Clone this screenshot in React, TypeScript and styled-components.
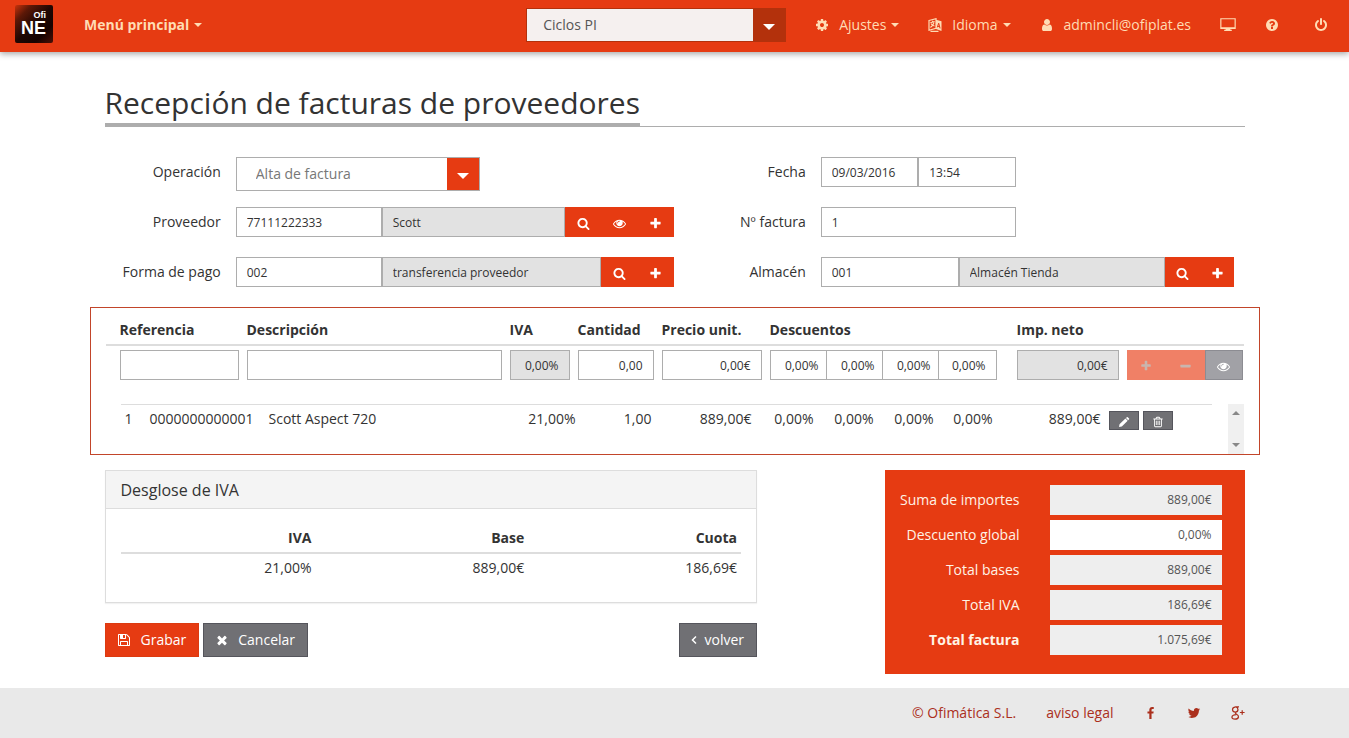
import React from "react";
import styled, { createGlobalStyle, css } from "styled-components";

const brand = "#e63b12";
const brandDark = "#b3310c";
const cream = "#ffdcb4";
const line = "#adadad";
const slate = "#707074";
const slateDark = "#55555c";

const GlobalStyle = createGlobalStyle`
  *, *::before, *::after { box-sizing: border-box; }
  body { margin: 0; background: #fff; color: #333; font: 14px/20px "Open Sans", "Noto Sans", sans-serif; }
  input, select, button { font-family: inherit; color: inherit; margin: 0; border-radius: 0; }
  button { cursor: pointer; }
  a { color: inherit; text-decoration: none; }
`;

/* ---------- icons (1792-unit grid) ---------- */

const shapes = {
  cog: "M1152 896q0-106-75-181t-181-75-181 75-75 181 75 181 181 75 181-75 75-181zm512-109v222q0 12-8 23t-20 13l-185 28q-19 54-39 91 35 50 107 138 10 12 10 25t-9 23q-27 37-99 108t-94 71q-12 0-26-9l-138-108q-44 23-91 38-16 136-29 186-7 28-36 28h-222q-14 0-24.5-8.5t-11.5-21.5l-28-184q-49-16-90-37l-141 107q-10 9-25 9-14 0-25-11-126-114-165-168-7-10-7-23 0-12 8-23 15-21 51-66.5t54-70.5q-27-50-41-99l-183-27q-13-2-21-12.5t-8-23.5v-222q0-12 8-23t19-13l186-28q14-46 39-92-40-57-107-138-10-12-10-24 0-10 9-23 26-36 98.5-107.5t94.5-71.5q13 0 26 10l138 107q44-23 91-38 16-136 29-186 7-28 36-28h222q14 0 24.5 8.5t11.5 21.5l28 184q49 16 90 37l142-107q9-9 24-9 13 0 25 10 129 119 165 170 7 8 7 22 0 12-8 23-15 21-51 66.5t-54 70.5q26 50 41 98l183 28q13 2 21 12.5t8 23.5z",
  user: "M1536 1399q0 109-62.5 187t-150.5 78h-854q-88 0-150.5-78t-62.5-187q0-85 8.5-160.5t31.5-152 58.5-131 94-89 134.5-34.5q131 128 313 128t313-128q76 0 134.5 34.5t94 89 58.5 131 31.5 152 8.5 160.5zm-256-887q0 159-112.5 271.5t-271.5 112.5-271.5-112.5-112.5-271.5 112.5-271.5 271.5-112.5 271.5 112.5 112.5 271.5z",
  help: "M1024 1376v-192q0-14-9-23t-23-9h-192q-14 0-23 9t-9 23v192q0 14 9 23t23 9h192q14 0 23-9t9-23zm256-672q0-88-55.5-163t-138.5-116-170-41q-243 0-371 213-15 24 8 42l132 100q7 6 19 6 16 0 25-12 53-68 86-92 34-24 86-24 48 0 85.5 26t37.5 59q0 38-20 61t-68 45q-63 28-115.5 86.5t-52.5 125.5v36q0 14 9 23t23 9h192q14 0 23-9t9-23q0-19 21.5-49.5t54.5-49.5q32-18 49-28.5t46-35 44.5-48 28-60.5 12.5-81zm384 192q0 209-103 385.5t-279.5 279.5-385.5 103-385.5-103-279.5-279.5-103-385.5 103-385.5 279.5-279.5 385.5-103 385.5 103 279.5 279.5 103 385.5z",
  power: "M1664 896q0 156-61 298t-164 245-245 164-298 61-298-61-245-164-164-245-61-298q0-182 80.5-343t226.5-270q43-32 95.5-25t83.5 50q32 42 24.5 94.5t-49.5 84.5q-98 74-151.5 181t-53.5 228q0 104 40.5 198.5t109.5 163.5 163.5 109.5 198.5 40.5 198.5-40.5 163.5-109.5 109.5-163.5 40.5-198.5q0-121-53.5-228t-151.5-181q-42-32-49.5-84.5t24.5-94.5q31-43 84-50t95 25q146 109 226.5 270t80.5 343zm-640-768v640q0 52-38 90t-90 38-90-38-38-90v-640q0-52 38-90t90-38 90 38 38 90z",
  desktop: "M30 130h1732v1200h-600v110h160v130h-852v-130h160v-110h-600zM160 260v880h1472v-880z",
  search: "M1216 832q0-185-131.5-316.5t-316.5-131.5-316.5 131.5-131.5 316.5 131.5 316.5 316.5 131.5 316.5-131.5 131.5-316.5zm512 832q0 52-38 90t-90 38q-54 0-90-38l-343-342q-179 124-399 124-143 0-273.5-55.5t-225-150-150-225-55.5-273.5 55.5-273.5 150-225 225-150 273.5-55.5 273.5 55.5 225 150 150 225 55.5 273.5q0 220-124 399l343 343q37 37 37 90z",
  eye: "M1664 960q-152-236-381-353 61 104 61 225 0 185-131.5 316.5t-316.5 131.5-316.5-131.5-131.5-316.5q0-121 61-225-229 117-381 353 133 205 333.5 326.5t434.5 121.5 434.5-121.5 333.5-326.5zm-720-384q0-20-14-34t-34-14q-125 0-214.5 89.5t-89.5 214.5q0 20 14 34t34 14 34-14 14-34q0-86 61-147t147-61q20 0 34-14t14-34zm848 384q0 34-20 69-140 230-376.5 368.5t-499.5 138.5-499.5-139-376.5-368q-20-35-20-69t20-69q140-229 376.5-368t499.5-139 499.5 139 376.5 368q20 35 20 69z",
  plus: "M1600 736v192q0 40-28 68t-68 28h-416v416q0 40-28 68t-68 28h-192q-40 0-68-28t-28-68v-416h-416q-40 0-68-28t-28-68v-192q0-40 28-68t68-28h416v-416q0-40 28-68t68-28h192q40 0 68 28t28 68v416h416q40 0 68 28t28 68z",
  minus: "M1600 736v192q0 40-28 68t-68 28h-1216q-40 0-68-28t-28-68v-192q0-40 28-68t68-28h1216q40 0 68 28t28 68z",
  times: "M1490 1322q0 40-28 68l-136 136q-28 28-68 28t-68-28l-294-294-294 294q-28 28-68 28t-68-28l-136-136q-28-28-28-68t28-68l294-294-294-294q-28-28-28-68t28-68l136-136q28-28 68-28t68 28l294 294 294-294q28-28 68-28t68 28l136 136q28 28 28 68t-28 68l-294 294 294 294q28 28 28 68z",
  save: "M512 1536h768v-384h-768v384zm896 0h128v-896q0-14-10-38.5t-20-34.5l-281-281q-10-10-34-20t-39-10v416q0 40-28 68t-68 28h-576q-40 0-68-28t-28-68v-416h-128v1280h128v-416q0-40 28-68t68-28h832q40 0 68 28t28 68v416zm-384-928v-320q0-13-9.5-22.5t-22.5-9.5h-192q-13 0-22.5 9.5t-9.5 22.5v320q0 13 9.5 22.5t22.5 9.5h192q13 0 22.5-9.5t9.5-22.5zm640 32v928q0 40-28 68t-68 28h-1344q-40 0-68-28t-28-68v-1344q0-40 28-68t68-28h928q40 0 88 20t76 48l280 280q28 28 48 76t20 88z",
  pencil: "M1190 300l130-130q70-60 140 0l190 190q60 70 0 140l-130 130zM1110 380l330 330-830 830q-30 30-70 36l-340 60q-50 0-40-50l60-320q8-50 40-80z",
  trash: "M704 736v576q0 14-9 23t-23 9h-64q-14 0-23-9t-9-23v-576q0-14 9-23t23-9h64q14 0 23 9t9 23zm256 0v576q0 14-9 23t-23 9h-64q-14 0-23-9t-9-23v-576q0-14 9-23t23-9h64q14 0 23 9t9 23zm256 0v576q0 14-9 23t-23 9h-64q-14 0-23-9t-9-23v-576q0-14 9-23t23-9h64q14 0 23 9t9 23zm128 724v-948h-896v948q0 22 7 40.5t14.5 27 10.5 8.5h832q3 0 10.5-8.5t14.5-27 7-40.5zm-672-1076h448l-48-117q-7-9-17-11h-317q-10 2-17 11zm928 32v64q0 14-9 23t-23 9h-96v948q0 83-47 143.5t-113 60.5h-832q-66 0-113-58.5t-47-141.5v-952h-96q-14 0-23-9t-9-23v-64q0-14 9-23t23-9h309l70-167q15-37 54-63t79-26h320q40 0 79 26t54 63l70 167h309q14 0 23 9t9 23z",
  facebook: "M1343 12v264h-157q-86 0-116 36t-30 108v189h293l-39 296h-254v759h-306v-759h-255v-296h255v-218q0-186 104-288.5t277-102.5q147 0 228 12z",
  twitter: "M1684 408q-67 98-162 167 1 14 1 42 0 130-38 259.5t-115.5 248.5-184.5 210.5-258 146-323 54.5q-271 0-496-145 35 4 78 4 225 0 401-138-105-2-188-64.5t-114-159.5q33 5 61 5 43 0 85-11-112-23-185.5-111.5t-73.5-205.5v-4q68 38 146 41-66-44-105-115t-39-154q0-88 44-163 121 149 294.5 238.5t371.5 99.5q-8-38-8-74 0-134 94.5-228.5t228.5-94.5q140 0 236 102 109-21 205-78-37 115-142 178 93-10 186-50z",
};

const Svg = styled.svg`
  display: block;
  flex: none;
  fill: currentColor;
`;

function Icon({ name, size = 14 }: { name: keyof typeof shapes; size?: number }) {
  return (
    <Svg width={size} height={size} viewBox="0 0 1792 1792" fillRule="evenodd" aria-hidden="true">
      <path d={shapes[name]} />
    </Svg>
  );
}

function AngleIcon() {
  return (
    <Svg width="6" height="14" viewBox="0 0 6 14" aria-hidden="true">
      <path d="M5 3.500 1.500 7 5 10.500" fill="none" stroke="currentColor" strokeWidth="1.500" />
    </Svg>
  );
}

function LanguageIcon() {
  return (
    <Svg width="14" height="14" viewBox="0 0 14 14" aria-hidden="true">
      <path d="M8 1.800 13.500 3.300V13L8 11z" />
      <g fill="none" stroke="currentColor" strokeWidth="1.200">
        <path d="M1 2.500 8 .7v9.600L1 12.300zM2.500 13.400h8" />
        <path d="M2.400 4.700 6.600 3.500M4.500 2.800v1.400M6 4.500Q5 7.600 2.400 9.400M3 5.700Q4.500 7.600 6.500 8" />
      </g>
      <path d="M9.300 9.400 10.700 5.200l1.400 5.200M9.800 8.200l1.900.6" fill="none" stroke={brand} strokeWidth="1" />
    </Svg>
  );
}

function GooglePlusIcon() {
  return (
    <Svg width="14" height="14" viewBox="0 0 14 14" aria-hidden="true">
      <g fill="none" stroke="currentColor" strokeWidth="1.200">
        <path d="M8 .9H4.600Q1.500 1.300 1.500 3.700 1.700 6 4.400 6.100 6.900 5.900 7 3.600 6.800 1.500 5 1" />
        <path d="M4.600 6.200Q4 7.200 5.300 8 7.800 9.300 7.500 11 7 13.200 4 13.200 1 13.100.9 11.200 1.100 8.900 5.300 8.700" />
        <path d="M11.200 4.200v4.600M8.900 6.500h4.700" />
      </g>
    </Svg>
  );
}

/* ---------- top bar ---------- */

const TopBar = styled.header`
  display: flex;
  align-items: center;
  height: 52px;
  padding: 0 21px 2px 15px;
  background: ${brand};
  color: ${cream};
  box-shadow: 0 2px 6px rgba(0, 0, 0, 0.35);
`;

const Logo = styled.a`
  display: flex;
  flex-direction: column;
  align-items: flex-end;
  width: 38px;
  height: 38px;
  padding: 6px 7px 0 0;
  margin: 0 31px 2px 0;
  border-radius: 2px;
  background: linear-gradient(135deg, #c9330c 0, #5c1807 22%, #1f0703 50%, #160301 75%, #4a1006 100%);
  color: #fff;
  font-family: "Liberation Sans", Arial, sans-serif;
  font-weight: bold;
`;

const LogoSmall = styled.span`
  font-size: 9px;
  line-height: 9px;
`;

const LogoBig = styled.span`
  font-size: 18px;
  line-height: 17px;
`;

const MenuButton = styled.button<{ $strong?: boolean }>`
  display: flex;
  align-items: center;
  padding: 0;
  border: 0;
  background: none;
  font-size: 14px;
  line-height: 20px;
  font-weight: ${(p) => (p.$strong ? 700 : 400)};
`;

const Caret = styled.span<{ $big?: boolean }>`
  width: 0;
  height: 0;
  margin-left: ${(p) => (p.$big ? 0 : 5)}px;
  border: solid transparent;
  border-width: ${(p) => (p.$big ? "6px 6px 0" : "4px 4px 0")};
  border-top-color: currentColor;
`;

const TopNav = styled.nav`
  display: flex;
  align-items: center;
  gap: 29px;
  margin-left: auto;
`;

const MenuText = styled.span`
  margin-left: 10px;
`;

const IconLink = styled.a<{ $apart?: boolean }>`
  display: flex;
  margin-left: ${(p) => (p.$apart ? 6 : 0)}px;
`;

const SelectBox = styled.div<{ $dark?: boolean }>`
  position: relative;
  width: ${(p) => (p.$dark ? "260px" : "55.7%")};
  height: 34px;
  border: 1px solid ${(p) => (p.$dark ? brandDark : line)};
  background: ${(p) => (p.$dark ? "#f5f0ef" : "#fff")};
  color: ${(p) => (p.$dark ? "#555" : "#777")};
`;

const Select = styled.select<{ $indent: number }>`
  display: block;
  width: 100%;
  height: 32px;
  padding: 0 40px 1px ${(p) => p.$indent}px;
  border: 0;
  background: none;
  appearance: none;
  font-size: 14px;
`;

const SelectArrow = styled.span<{ $dark?: boolean }>`
  position: absolute;
  top: 0;
  right: 0;
  display: flex;
  align-items: center;
  justify-content: center;
  width: 32px;
  height: 32px;
  padding-top: 4px;
  background: ${(p) => (p.$dark ? brandDark : brand)};
  color: #fff;
  pointer-events: none;
`;

/* ---------- page ---------- */

const Container = styled.main`
  max-width: 1170px;
  margin: 0 auto;
  padding-top: 33px;
`;

const TitleRow = styled.div`
  display: flex;
  margin: 0 15px 30px;
  box-shadow: inset 0 -1px 0 ${line};
`;

const Title = styled.h1`
  margin: 0;
  padding-bottom: 2px;
  border-bottom: 4px solid ${line};
  font-size: 30px;
  line-height: 36px;
  font-weight: 400;
`;

const Form = styled.form`
  display: grid;
  grid-template-columns: 1fr 1fr;
  grid-auto-rows: 30px;
  row-gap: 20px;
  margin-bottom: 20px;
`;

const FormRow = styled.div`
  display: grid;
  grid-template-columns: 1fr 3fr;
`;

const FormLabel = styled.label`
  padding-right: 15px;
  line-height: 30px;
  text-align: right;
`;

const Group = styled.div<{ $width?: string }>`
  display: flex;
  width: ${(p) => p.$width ?? "100%"};
`;

const Field = styled.input<{ $muted?: boolean; $right?: boolean; $basis?: string }>`
  min-width: 0;
  flex: ${(p) => (p.$basis ? `0 0 ${p.$basis}` : "1 1 0")};
  display: block;
  width: 100%;
  height: 30px;
  padding: 0 10px;
  border: 1px solid ${line};
  background: ${(p) => (p.$muted ? "#e2e2e2" : "#fff")};
  font-size: 12px;
  text-align: ${(p) => (p.$right ? "right" : "left")};
`;

const GroupButton = styled.button<{ $width: number; $tone?: "faded" | "grey" }>`
  display: flex;
  flex: none;
  align-items: center;
  justify-content: center;
  width: ${(p) => p.$width}px;
  height: 30px;
  padding: 2px 0 0;
  border: 0;
  background: ${brand};
  color: #fff;
  ${(p) =>
    p.$tone === "faded" &&
    css`
      background: #f08066;
      color: #c9b5ae;
    `}
  ${(p) =>
    p.$tone === "grey" &&
    css`
      border: 1px solid #8c8c92;
      background: #a1a1a6;
    `}
`;

/* ---------- invoice lines ---------- */

const LinesBox = styled.section`
  height: 148px;
  padding: 10px 15px 0;
  margin-bottom: 15px;
  border: 1px solid #c2452a;
`;

const Table = styled.table`
  width: 100%;
  border-collapse: collapse;
  table-layout: fixed;
`;

const EntryHead = styled.th<{ $first?: boolean }>`
  height: 27px;
  padding: 0 4px 2px ${(p) => (p.$first ? 14 : 4)}px;
  border-bottom: 2px solid #ddd;
  text-align: left;
  white-space: nowrap;
`;

const EntryCell = styled.td<{ $first?: boolean; $last?: boolean }>`
  padding: 4px ${(p) => (p.$last ? 1 : 4)}px 0 ${(p) => (p.$first ? 14 : 4)}px;
`;

const Discounts = styled.div`
  display: flex;
  width: 227px;

  input {
    flex: 0 0 56px;
    padding-right: 7px;
    border-right: 0;
  }
  input:last-child {
    flex: 0 0 59px;
    padding-right: 10px;
    border-right: 1px solid ${line};
  }
`;

const LinesScroll = styled.div`
  display: flex;
  justify-content: space-between;
  height: 50px;
  margin: 24px 0 0 15px;
`;

const LinesArea = styled.div`
  flex: 1;
  padding-right: 16px;
`;

const LineCell = styled.td<{ $right?: boolean }>`
  height: 28px;
  padding: 0 4px;
  border-top: 1px solid #ddd;
  text-align: ${(p) => (p.$right ? "right" : "left")};
  white-space: nowrap;
`;

const RowActions = styled.div`
  display: flex;
  gap: 4px;
  padding-top: 3px;
`;

const RowButton = styled.button`
  display: flex;
  align-items: center;
  justify-content: center;
  width: 30px;
  height: 19px;
  padding: 4px 0 0;
  border: 1px solid ${slateDark};
  background: ${slate};
  color: #fff;
`;

const ScrollTrack = styled.div`
  display: flex;
  flex-direction: column;
  justify-content: space-between;
  align-items: center;
  width: 16px;
  height: 50px;
  padding: 7px 0;
  background: #f0f0f0;
`;

const ScrollArrow = styled.span<{ $up?: boolean }>`
  border: solid transparent;
  border-width: ${(p) => (p.$up ? "0 4px 4px" : "4px 4px 0")};
  border-bottom-color: ${(p) => (p.$up ? "#888" : "transparent")};
  border-top-color: ${(p) => (p.$up ? "transparent" : "#888")};
`;

/* ---------- lower part ---------- */

const Lower = styled.div`
  display: grid;
  grid-template-columns: 7fr 5fr;
  align-items: start;
  margin-bottom: 14px;
`;

const LeftColumn = styled.div`
  padding: 0 15px;
`;

const Panel = styled.section`
  height: 133px;
  margin-bottom: 20px;
  border: 1px solid #ddd;
  box-shadow: 0 1px 1px rgba(0, 0, 0, 0.05);
`;

const PanelTitle = styled.h2`
  margin: 0;
  padding: 10px 15px 8px;
  border-bottom: 1px solid #ddd;
  background: #f4f4f4;
  font-size: 16px;
  line-height: 19px;
  font-weight: 400;
`;

const PanelBody = styled.div`
  padding: 14px 15px;
`;

const VatHead = styled.th`
  height: 30px;
  padding: 1px 4px 0;
  border-bottom: 2px solid #ddd;
  text-align: right;
`;

const VatCell = styled.td`
  height: 28px;
  padding: 0 4px;
  text-align: right;
`;

const Actions = styled.div`
  display: flex;
  gap: 4px;
`;

const ActionButton = styled.button<{ $primary?: boolean; $end?: boolean; $gap?: number }>`
  display: flex;
  align-items: center;
  gap: ${(p) => p.$gap ?? 9}px;
  height: 34px;
  padding: 0 12px 1px 11px;
  margin-left: ${(p) => (p.$end ? "auto" : 0)};
  border: 1px solid ${(p) => (p.$primary ? "#dc3a10" : slateDark)};
  background: ${(p) => (p.$primary ? brand : slate)};
  color: #fff;
  font-size: 14px;
  line-height: 20px;
`;

const Totals = styled.section`
  display: grid;
  gap: 5px;
  width: 360px;
  height: 204px;
  padding: 15px 23px 0 0;
  margin: 0 15px 0 auto;
  align-content: start;
  background: ${brand};
`;

const TotalRow = styled.div<{ $strong?: boolean }>`
  display: flex;
  justify-content: flex-end;
  gap: 30px;
  color: #fff3e6;
  line-height: 30px;
  font-weight: ${(p) => (p.$strong ? 700 : 400)};
`;

const TotalField = styled.input<{ $muted?: boolean }>`
  width: 172px;
  height: 30px;
  padding: 0 10px 2px;
  border: 0;
  background: ${(p) => (p.$muted ? "#eee" : "#fff")};
  color: #555;
  font-size: 12px;
  text-align: right;
`;

const Footer = styled.footer`
  background: #e9e9e9;
  color: #ab2f1c;
`;

const FooterInner = styled.div`
  display: flex;
  align-items: center;
  justify-content: flex-end;
  gap: 30px;
  max-width: 1170px;
  height: 50px;
  padding: 0 15px;
  margin: 0 auto;
`;

const totals = [
  { id: "suma", label: "Suma de importes", value: "889,00€", muted: true },
  { id: "dto", label: "Descuento global", value: "0,00%" },
  { id: "bases", label: "Total bases", value: "889,00€", muted: true },
  { id: "iva", label: "Total IVA", value: "186,69€", muted: true },
  { id: "total", label: "Total factura", value: "1.075,69€", muted: true, strong: true },
];

export default function App() {
  return (
    <>
      <GlobalStyle />
      <TopBar>
        <Logo href="#inicio">
          <LogoSmall>Ofi</LogoSmall>
          <LogoBig>NE</LogoBig>
        </Logo>
        <MenuButton $strong>
          Menú principal <Caret />
        </MenuButton>
        <TopNav>
          <SelectBox $dark>
            <Select $indent={16} aria-label="Empresa" defaultValue="Ciclos PI">
              <option>Ciclos PI</option>
            </Select>
            <SelectArrow $dark>
              <Caret $big />
            </SelectArrow>
          </SelectBox>
          <MenuButton>
            <Icon name="cog" />
            <MenuText>Ajustes</MenuText>
            <Caret />
          </MenuButton>
          <MenuButton>
            <LanguageIcon />
            <MenuText>Idioma</MenuText>
            <Caret />
          </MenuButton>
          <MenuButton>
            <Icon name="user" />
            <MenuText>admincli@ofiplat.es</MenuText>
          </MenuButton>
          <IconLink href="#escritorio" aria-label="Escritorio">
            <Icon name="desktop" size={16} />
          </IconLink>
          <IconLink href="#ayuda" aria-label="Ayuda">
            <Icon name="help" />
          </IconLink>
          <IconLink href="#salir" aria-label="Salir" $apart>
            <Icon name="power" />
          </IconLink>
        </TopNav>
      </TopBar>

      <Container>
        <TitleRow>
          <Title>Recepción de facturas de proveedores</Title>
        </TitleRow>

        <Form>
          <FormRow>
            <FormLabel htmlFor="operacion">Operación</FormLabel>
            <SelectBox>
              <Select $indent={19} id="operacion" defaultValue="Alta de factura">
                <option>Alta de factura</option>
              </Select>
              <SelectArrow>
                <Caret $big />
              </SelectArrow>
            </SelectBox>
          </FormRow>
          <FormRow>
            <FormLabel htmlFor="fecha">Fecha</FormLabel>
            <Group $width="44.4444%">
              <Field id="fecha" defaultValue="09/03/2016" />
              <Field aria-label="Hora" defaultValue="13:54" />
            </Group>
          </FormRow>

          <FormRow>
            <FormLabel htmlFor="proveedor">Proveedor</FormLabel>
            <Group $width="99.8%">
              <Field id="proveedor" $basis="33.3333%" defaultValue="77111222333" />
              <Field aria-label="Nombre del proveedor" $muted readOnly value="Scott" />
              <GroupButton type="button" $width={37} aria-label="Buscar"><Icon name="search" size={13} /></GroupButton>
              <GroupButton type="button" $width={36} aria-label="Ver"><Icon name="eye" size={13} /></GroupButton>
              <GroupButton type="button" $width={36} aria-label="Añadir"><Icon name="plus" size={13} /></GroupButton>
            </Group>
          </FormRow>
          <FormRow>
            <FormLabel htmlFor="numero">Nº factura</FormLabel>
            <Group $width="44.4444%">
              <Field id="numero" defaultValue="1" />
            </Group>
          </FormRow>

          <FormRow>
            <FormLabel htmlFor="pago">Forma de pago</FormLabel>
            <Group $width="99.8%">
              <Field id="pago" $basis="33.3333%" defaultValue="002" />
              <Field aria-label="Nombre de la forma de pago" $muted readOnly value="transferencia proveedor" />
              <GroupButton type="button" $width={37} aria-label="Buscar"><Icon name="search" size={13} /></GroupButton>
              <GroupButton type="button" $width={36} aria-label="Añadir"><Icon name="plus" size={13} /></GroupButton>
            </Group>
          </FormRow>
          <FormRow>
            <FormLabel htmlFor="almacen">Almacén</FormLabel>
            <Group $width="94.2%">
              <Field id="almacen" $basis="33.3333%" defaultValue="001" />
              <Field aria-label="Nombre del almacén" $muted readOnly value="Almacén Tienda" />
              <GroupButton type="button" $width={35} aria-label="Buscar"><Icon name="search" size={13} /></GroupButton>
              <GroupButton type="button" $width={34} aria-label="Añadir"><Icon name="plus" size={13} /></GroupButton>
            </Group>
          </FormRow>
        </Form>

        <LinesBox>
          <Table>
            <colgroup>
              <col width="137" />
              <col />
              <col width="68" />
              <col width="84" />
              <col width="108" />
              <col width="247" />
              <col width="110" />
              <col width="121" />
            </colgroup>
            <thead>
              <tr>
                <EntryHead $first>Referencia</EntryHead>
                <EntryHead>Descripción</EntryHead>
                <EntryHead>IVA</EntryHead>
                <EntryHead>Cantidad</EntryHead>
                <EntryHead>Precio unit.</EntryHead>
                <EntryHead>Descuentos</EntryHead>
                <EntryHead>Imp. neto</EntryHead>
                <EntryHead aria-label="Acciones" />
              </tr>
            </thead>
            <tbody>
              <tr>
                <EntryCell $first><Field aria-label="Referencia" /></EntryCell>
                <EntryCell><Field aria-label="Descripción" /></EntryCell>
                <EntryCell><Field aria-label="IVA" $right $muted readOnly value="0,00%" /></EntryCell>
                <EntryCell><Field aria-label="Cantidad" $right defaultValue="0,00" /></EntryCell>
                <EntryCell><Field aria-label="Precio unitario" $right defaultValue="0,00€" /></EntryCell>
                <EntryCell>
                  <Discounts>
                    {[1, 2, 3, 4].map((n) => (
                      <Field key={n} aria-label={`Descuento ${n}`} $right defaultValue="0,00%" />
                    ))}
                  </Discounts>
                </EntryCell>
                <EntryCell><Field aria-label="Importe neto" $right $muted readOnly value="0,00€" /></EntryCell>
                <EntryCell $last>
                  <Group>
                    <GroupButton type="button" disabled $tone="faded" $width={39} aria-label="Añadir línea"><Icon name="plus" size={12} /></GroupButton>
                    <GroupButton type="button" disabled $tone="faded" $width={39} aria-label="Quitar línea"><Icon name="minus" size={13} /></GroupButton>
                    <GroupButton type="button" $tone="grey" $width={38} aria-label="Ver línea"><Icon name="eye" size={13} /></GroupButton>
                  </Group>
                </EntryCell>
              </tr>
            </tbody>
          </Table>

          <LinesScroll>
            <LinesArea>
              <Table>
                <colgroup>
                  <col width="25" />
                  <col width="119" />
                  <col />
                  <col width="68" />
                  <col width="76" />
                  <col width="100" />
                  <col width="62" />
                  <col width="60" />
                  <col width="60" />
                  <col width="59" />
                  <col width="108" />
                  <col width="107" />
                </colgroup>
                <tbody>
                  <tr>
                    <LineCell>1</LineCell>
                    <LineCell>0000000000001</LineCell>
                    <LineCell>Scott Aspect 720</LineCell>
                    <LineCell $right>21,00%</LineCell>
                    <LineCell $right>1,00</LineCell>
                    <LineCell $right>889,00€</LineCell>
                    <LineCell $right>0,00%</LineCell>
                    <LineCell $right>0,00%</LineCell>
                    <LineCell $right>0,00%</LineCell>
                    <LineCell $right>0,00%</LineCell>
                    <LineCell $right>889,00€</LineCell>
                    <LineCell>
                      <RowActions>
                        <RowButton aria-label="Editar"><Icon name="pencil" size={12} /></RowButton>
                        <RowButton aria-label="Borrar"><Icon name="trash" size={12} /></RowButton>
                      </RowActions>
                    </LineCell>
                  </tr>
                </tbody>
              </Table>
            </LinesArea>
            <ScrollTrack aria-hidden="true">
              <ScrollArrow $up />
              <ScrollArrow />
            </ScrollTrack>
          </LinesScroll>
        </LinesBox>

        <Lower>
          <LeftColumn>
            <Panel>
              <PanelTitle>Desglose de IVA</PanelTitle>
              <PanelBody>
                <Table>
                  <colgroup>
                    <col width="195" />
                    <col />
                    <col />
                  </colgroup>
                  <thead>
                    <tr>
                      <VatHead>IVA</VatHead>
                      <VatHead>Base</VatHead>
                      <VatHead>Cuota</VatHead>
                    </tr>
                  </thead>
                  <tbody>
                    <tr>
                      <VatCell>21,00%</VatCell>
                      <VatCell>889,00€</VatCell>
                      <VatCell>186,69€</VatCell>
                    </tr>
                  </tbody>
                </Table>
              </PanelBody>
            </Panel>
            <Actions>
              <ActionButton $primary $gap={10}><Icon name="save" />Grabar</ActionButton>
              <ActionButton><Icon name="times" />Cancelar</ActionButton>
              <ActionButton $end $gap={7}><AngleIcon />volver</ActionButton>
            </Actions>
          </LeftColumn>

          <Totals>
            {totals.map((t) => (
              <TotalRow key={t.id} $strong={t.strong}>
                <label htmlFor={t.id}>{t.label}</label>
                <TotalField id={t.id} $muted={t.muted} readOnly={t.muted} defaultValue={t.value} />
              </TotalRow>
            ))}
          </Totals>
        </Lower>
      </Container>

      <Footer>
        <FooterInner>
          <a href="#ofimatica">© Ofimática S.L.</a>
          <a href="#legal">aviso legal</a>
          <IconLink href="#facebook" aria-label="Facebook"><Icon name="facebook" size={13} /></IconLink>
          <IconLink href="#twitter" aria-label="Twitter"><Icon name="twitter" /></IconLink>
          <IconLink href="#google" aria-label="Google+"><GooglePlusIcon /></IconLink>
        </FooterInner>
      </Footer>
    </>
  );
}
